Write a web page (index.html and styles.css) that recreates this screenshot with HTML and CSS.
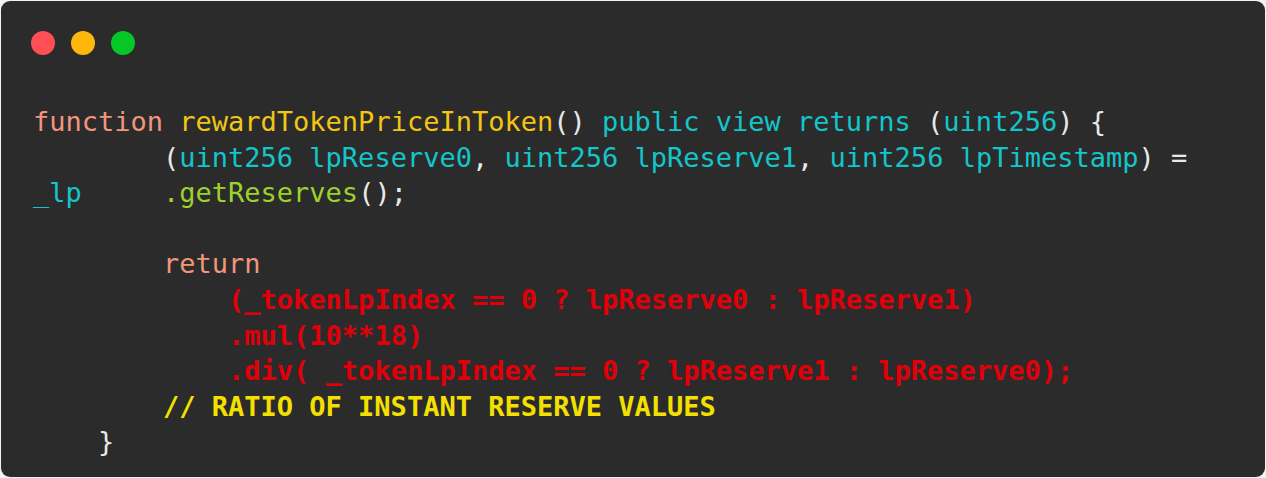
FILE: index.html
```html
<!DOCTYPE html>
<html>
<head>
<meta charset="utf-8">
<link rel="stylesheet" href="styles.css">
</head>
<body>
<div class="window">
  <div class="dots">
    <span class="dot red"></span>
    <span class="dot yellow"></span>
    <span class="dot green"></span>
  </div>
<pre class="code"><span class="kw">function</span> <span class="fn">rewardTokenPriceInToken</span><span class="pl">()</span> <span class="ty">public view returns</span> <span class="pl">(</span><span class="ty">uint256</span><span class="pl">) {</span>
        <span class="pl">(</span><span class="ty">uint256 lpReserve0</span><span class="pl">,</span> <span class="ty">uint256 lpReserve1</span><span class="pl">,</span> <span class="ty">uint256 lpTimestamp</span><span class="pl">) =</span>
<span class="ty">_lp</span>     <span class="mt">.getReserves</span><span class="pl">();</span>

        <span class="kw">return</span>
            <span class="hl">(_tokenLpIndex == 0 ? lpReserve0 : lpReserve1)</span>
            <span class="hl">.mul(10**18)</span>
            <span class="hl">.div( _tokenLpIndex == 0 ? lpReserve1 : lpReserve0);</span>
        <span class="cm">// RATIO OF INSTANT RESERVE VALUES</span>
    <span class="pl">}</span></pre>
</div>
</body>
</html>
```

FILE: styles.css
```css
html, body {
  margin: 0;
  padding: 0;
  background: #f2f2f2;
}

.window {
  box-sizing: border-box;
  margin: 1px;
  width: 1264px;
  height: 476px;
  background: #2b2b2b;
  border-radius: 9px;
  padding: 30px 32px;
  overflow: hidden;
}

.dots {
  display: flex;
  gap: 16px;
  height: 24px;
  margin-left: -2px;
}

.dot {
  width: 24px;
  height: 24px;
  border-radius: 50%;
  display: block;
}

.dot.red { background: #fd4f55; }
.dot.yellow { background: #feb70a; }
.dot.green { background: #05c824; }

.code {
  margin: 49px 0 0 0;
  font-family: "DejaVu Sans Mono", monospace;
  font-size: 27px;
  line-height: 35.6px;
  color: #e8e8e8;
  white-space: pre;
}

.kw { color: #f1967b; }
.fn { color: #f2c614; }
.pl { color: #e8e8e8; }
.ty { color: #14c5c9; }
.mt { color: #9dd22c; }
.hl { color: #e1000a; font-weight: bold; }
.cm { color: #f4e000; font-weight: bold; }
```
